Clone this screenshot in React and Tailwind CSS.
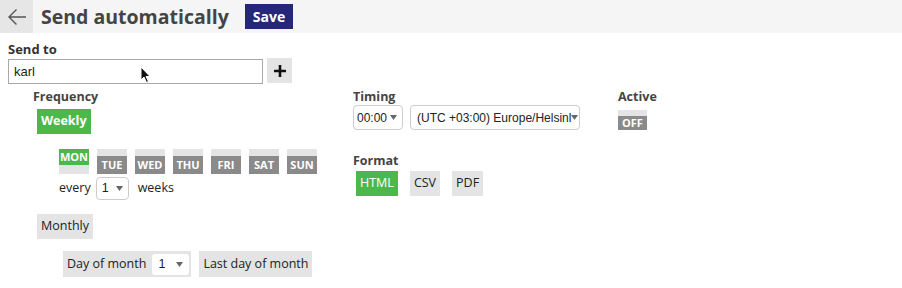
import React from "react";

const F = { fontFamily: '"Open Sans", "DejaVu Sans", sans-serif' };
const A = { fontFamily: '"Liberation Sans", Arial, sans-serif' };

function Day({ label, on }) {
  return (
    <div className="w-[30px] h-[25px] bg-[#e4e4e4] flex flex-col">
      {on ? (
        <div className="h-[16px] bg-[#4cb84c] text-white text-[11px] font-bold leading-[16px] text-center">
          {label}
        </div>
      ) : (
        <div className="mt-auto h-[18px] bg-[#8a8a8a] text-white text-[11px] font-bold leading-[18px] text-center">
          {label}
        </div>
      )}
    </div>
  );
}

function Caret() {
  return (
    <svg width="7" height="5" viewBox="0 0 7 5" className="inline-block shrink-0">
      <path d="M0 0 L7 0 L3.5 5 Z" fill="#666" />
    </svg>
  );
}

export default function App() {
  return (
    <div className="relative w-[902px] h-[288px] bg-white text-[#333]" style={F}>
      <div className="h-[33px] bg-[#f5f5f5] flex items-center">
        <div className="w-[33px] h-[33px] bg-[#e6e6e6] flex items-center justify-center">
          <svg width="20" height="18" viewBox="0 0 20 18">
            <path d="M19 9 H2 M9.5 1.5 L2 9 L9.5 16.5" fill="none" stroke="#555" strokeWidth="1.4" />
          </svg>
        </div>
        <div className="ml-2 text-[19.5px] font-bold text-[#444] leading-none">Send automatically</div>
        <button className="ml-4 h-[25px] px-[8px] bg-[#27277a] text-white font-bold text-[14px] leading-none">
          Save
        </button>
      </div>

      <div className="px-2">
        <div className="mt-[8px] text-[13px] font-bold leading-[17px] text-[#333]">Send to</div>
        <div className="flex items-start">
          <div className="mt-[1px] w-[255px] h-[25px] border border-[#a8a8a8] flex items-center px-[5px] text-[13px] text-[#222]" style={A}>
            karl
          </div>
          <div className="ml-1 w-[25px] h-[25px] bg-[#e4e4e4] flex items-center justify-center">
            <svg width="14" height="14" viewBox="0 0 14 14">
              <path d="M7 1 V13 M1 7 H13" stroke="#111" strokeWidth="2.6" />
            </svg>
          </div>
        </div>

        <div className="flex pl-[25px] mt-[5px]">
          <div className="w-[320px]">
            <div className="text-[12.5px] font-bold leading-[16px] text-[#444]">Frequency</div>
            <button className="ml-1 mt-[4px] h-[25px] px-[4px] bg-[#4cb84c] text-white font-bold text-[12.5px] leading-none">
              Weekly
            </button>
            <div className="ml-[26px] mt-[15px] flex gap-2">
              <Day label="MON" on />
              <Day label="TUE" />
              <Day label="WED" />
              <Day label="THU" />
              <Day label="FRI" />
              <Day label="SAT" />
              <Day label="SUN" />
            </div>
            <div className="ml-[26px] mt-[3px] flex items-center text-[12.5px] text-[#222]">
              <span>every</span>
              <div className="ml-[5px] w-[33px] h-[23px] border border-[#ccc] rounded-[4px] flex items-center justify-between px-[5px]" style={A}>
                <span>1</span>
                <Caret />
              </div>
              <span className="ml-[9px]">weeks</span>
            </div>
            <button className="ml-1 mt-[14px] h-[25px] px-[4px] bg-[#e4e4e4] text-[#222] text-[12.5px] leading-none">
              Monthly
            </button>
            <div className="ml-[30px] mt-[12px] flex text-[12.5px] text-[#222]">
              <div className="h-[26px] bg-[#e4e4e4] flex items-center pl-[4px] pr-[2px]">
                <span>Day of month</span>
                <div className="ml-[6px] w-[37px] h-[21px] bg-white rounded-[3px] flex items-center justify-between px-[6px]" style={A}>
                  <span>1</span>
                  <Caret />
                </div>
              </div>
              <button className="ml-2 h-[26px] px-[4px] bg-[#e4e4e4] text-[#222] text-[12.5px] leading-none">
                Last day of month
              </button>
            </div>
          </div>

          <div className="w-[265px]">
            <div className="text-[12.5px] font-bold leading-[16px] text-[#444]">Timing</div>
            <div className="flex gap-[7px] text-[12px] text-[#222]" style={A}>
              <div className="w-[50px] h-[25px] border border-[#ccc] rounded-[4px] flex items-center px-[3px] gap-[3px]">
                <span>00:00</span>
                <Caret />
              </div>
              <div className="w-[170px] h-[25px] border border-[#ccc] rounded-[4px] flex items-center pl-[6px] pr-[3px]">
                <span className="whitespace-nowrap">(UTC +03:00) Europe/Helsinl</span>
                <Caret />
              </div>
            </div>
            <div className="mt-[23px] text-[12.5px] font-bold leading-[16px] text-[#444]">Format</div>
            <div className="ml-[3px] mt-[2px] flex gap-3 text-[12.5px]">
              <button className="h-[25px] px-[4px] bg-[#4cb84c] text-white leading-none">HTML</button>
              <button className="h-[25px] px-[4px] bg-[#e4e4e4] text-[#222] leading-none">CSV</button>
              <button className="h-[25px] px-[4px] bg-[#e4e4e4] text-[#222] leading-none">PDF</button>
            </div>
          </div>

          <div>
            <div className="text-[12.5px] font-bold leading-[16px] text-[#444]">Active</div>
            <div className="mt-[5px] w-[29px] h-[20px] bg-[#e4e4e4] flex flex-col">
              <div className="mt-auto h-[14px] bg-[#8a8a8a] text-white text-[11px] font-bold leading-[14px] text-center">
                OFF
              </div>
            </div>
          </div>
        </div>
      </div>

      <svg className="absolute left-[140px] top-[66px]" width="12" height="18" viewBox="0 0 12 18">
        <path d="M1 1 L1 14 L4 11 L6.5 16.5 L8.5 15.5 L6 10.5 L10 10.5 Z" fill="#111" stroke="#fff" strokeWidth="1" />
      </svg>
    </div>
  );
}
